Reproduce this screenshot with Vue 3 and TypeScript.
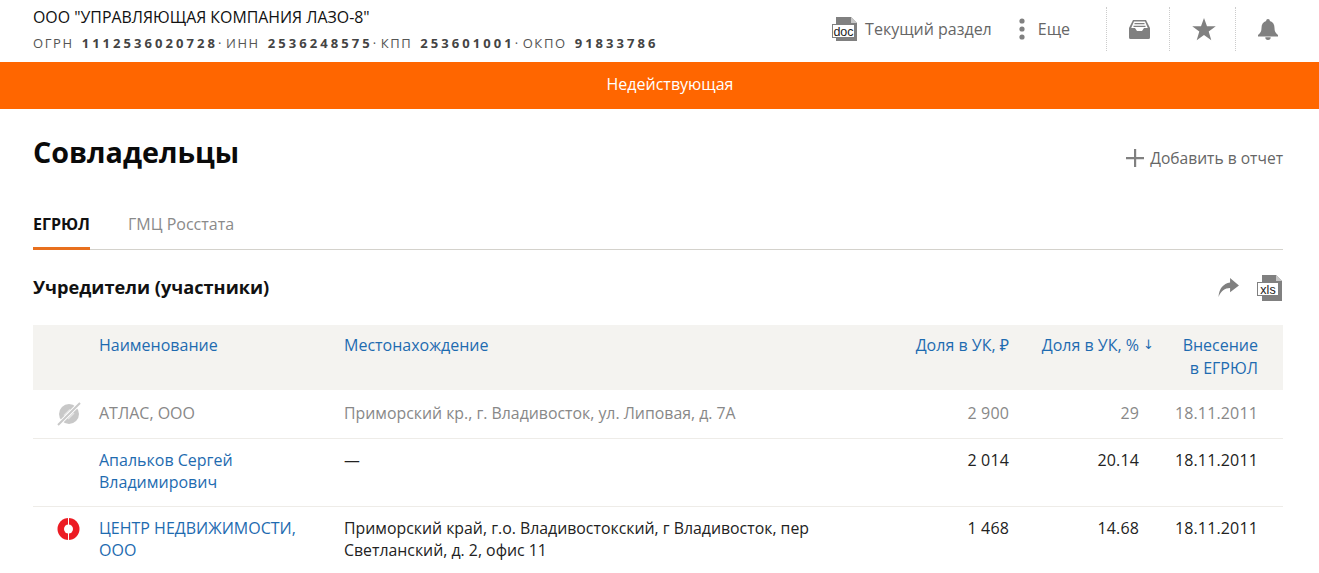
<template>
  <div class="page">
    <header class="topbar">
      <div class="org">
        <div class="org-name">ООО "УПРАВЛЯЮЩАЯ КОМПАНИЯ ЛАЗО-8"</div>
        <div class="org-codes">
          <template v-for="(c, i) in codes" :key="c.label">
            <span v-if="i > 0" class="dot">·</span>
            <span>{{ c.label }} <b>{{ c.value }}</b></span>
          </template>
        </div>
      </div>
      <nav class="tools">
        <a class="tool section-tool">
          <svg width="26" height="26" viewBox="0 0 26 26">
            <path d="M4 1h15l6 6v18H4z" fill="#808080" />
            <path d="M19 1l6 6h-6z" fill="#c8c8c8" />
            <rect x="0.500" y="8.500" width="22" height="13" fill="#fff" stroke="#808080" />
            <text x="11.500" y="19.500" text-anchor="middle" class="doc-label">doc</text>
          </svg>
          Текущий раздел
        </a>
        <a class="tool more-tool">
          <svg width="8" height="24" viewBox="0 0 8 24">
            <circle cx="4" cy="4" r="2.600" fill="#808080" />
            <circle cx="4" cy="12" r="2.600" fill="#808080" />
            <circle cx="4" cy="20" r="2.600" fill="#808080" />
          </svg>
          Еще
        </a>
        <div class="icon-btn inbox">
          <svg width="21" height="19" viewBox="0 0 21 19">
            <path fill="#808080" fill-rule="evenodd" d="M4 0h13l4 8v9.500a1.500 1.500 0 0 1-1.500 1.500h-18A1.500 1.500 0 0 1 0 17.500V8zM5 1.500 2.200 8H6l2 3h5l2-3h3.800L16 1.500z" />
            <path fill="#808080" d="M5.500 3h10v1.200h-10zM4.500 5.800h12v1.200h-12z" />
          </svg>
        </div>
        <div class="icon-btn star">
          <svg width="24" height="23" viewBox="0 0 24 23">
            <path fill="#808080" d="M12 0l3 8.300h8.800l-7.100 5.300 2.600 8.700L12 17.100 4.700 22.300l2.600-8.700L.2 8.300H9z" />
          </svg>
        </div>
        <div class="icon-btn bell">
          <svg width="20" height="21" viewBox="0 0 20 21">
            <path fill="#808080" d="M10 0a1.800 1.800 0 0 1 1.800 2C15 2.800 16.500 5.500 16.500 9c0 3.500 1 5 3.500 7v1.500H0V16c2.500-2 3.500-3.500 3.500-7 0-3.500 1.500-6.200 4.700-7A1.800 1.800 0 0 1 10 0zM7.300 18.300h5.400a2.700 2.700 0 0 1-5.400 0z" />
          </svg>
        </div>
      </nav>
    </header>

    <div class="status">Недействующая</div>

    <main class="content">
      <div class="title-row">
        <h1>Совладельцы</h1>
        <a class="add-report">
          <svg width="18" height="18" viewBox="0 0 18 18">
            <path fill="#808080" d="M8 0h2.200v8H18v2.200h-7.800V18H8v-7.800H0V8h8z" />
          </svg>
          Добавить в отчет
        </a>
      </div>

      <div class="tabs">
        <span class="tab active">ЕГРЮЛ</span>
        <span class="tab">ГМЦ Росстата</span>
      </div>

      <div class="section-head">
        <h2>Учредители (участники)</h2>
        <div class="section-actions">
          <svg width="23" height="21" viewBox="0 0 22 20">
            <path fill="#808080" d="M12.500 1 21 8 12.500 14.500v-4C7.500 10.500 3.800 13.300 1.500 19 1.800 11.500 6 6.200 12.500 5.300z" />
          </svg>
          <svg width="26" height="26" viewBox="0 0 26 26">
            <path d="M5 0h14l6 6v20H5z" fill="#808080" />
            <path d="M19 0l6 6h-6z" fill="#c8c8c8" />
            <rect x="0.500" y="7.500" width="21" height="13" fill="#fff" stroke="#808080" />
            <text x="11" y="18.500" text-anchor="middle" class="xls-label">xls</text>
          </svg>
        </div>
      </div>

      <table class="owners">
        <colgroup>
          <col class="c-icon" />
          <col class="c-name" />
          <col />
          <col class="c-sum" />
          <col class="c-pct" />
          <col class="c-date" />
        </colgroup>
        <thead>
          <tr>
            <th></th>
            <th>Наименование</th>
            <th>Местонахождение</th>
            <th class="num">Доля в УК, ₽</th>
            <th class="num sorted">Доля в УК, %<span class="arrow">↓</span></th>
            <th class="num">Внесение<br />в ЕГРЮЛ</th>
          </tr>
        </thead>
        <tbody>
          <tr v-for="row in rows" :key="row.name" :class="{ inactive: row.inactive }">
            <td class="icon-cell">
              <svg v-if="row.mark === 'off'" width="24" height="24" viewBox="0 0 24 24">
                <circle cx="12" cy="12" r="10" fill="#c8c8c8" />
                <path d="M7 13.500 13 7.500M11 17l6-6" stroke="#e4e4e4" stroke-width="1.500" />
                <path d="M1 23 23 1" stroke="#fff" stroke-width="4" />
                <path d="M1 23 23 1" stroke="#c8c8c8" stroke-width="2" />
              </svg>
              <svg v-else-if="row.mark === 'risk'" width="24" height="24" viewBox="0 0 24 24">
                <circle cx="11.500" cy="12" r="11" fill="#ec1c24" />
                <circle cx="11.500" cy="12" r="4.500" fill="#fff" />
                <path d="M11 1h1v7h-1zM11 16h1v7h-1z" fill="#fff" />
              </svg>
            </td>
            <td class="name"><a v-if="!row.inactive">{{ row.name }}</a><span v-else>{{ row.name }}</span></td>
            <td class="address">{{ row.address }}</td>
            <td class="num">{{ row.sum }}</td>
            <td class="num pct">{{ row.pct }}</td>
            <td class="num">{{ row.date }}</td>
          </tr>
        </tbody>
      </table>
    </main>
  </div>
</template>

<script setup lang="ts">
interface Owner {
  name: string
  address: string
  sum: string
  pct: string
  date: string
  inactive?: boolean
  mark?: 'off' | 'risk'
}

const codes = [
  { label: 'ОГРН', value: '1112536020728' },
  { label: 'ИНН', value: '2536248575' },
  { label: 'КПП', value: '253601001' },
  { label: 'ОКПО', value: '91833786' },
]

const rows: Owner[] = [
  {
    name: 'АТЛАС, ООО',
    address: 'Приморский кр., г. Владивосток, ул. Липовая, д. 7А',
    sum: '2 900',
    pct: '29',
    date: '18.11.2011',
    inactive: true,
    mark: 'off',
  },
  {
    name: 'Апальков Сергей Владимирович',
    address: '—',
    sum: '2 014',
    pct: '20.14',
    date: '18.11.2011',
  },
  {
    name: 'ЦЕНТР НЕДВИЖИМОСТИ, ООО',
    address: 'Приморский край, г.о. Владивостокский, г Владивосток, пер Светланский, д. 2, офис 11',
    sum: '1 468',
    pct: '14.68',
    date: '18.11.2011',
    mark: 'risk',
  },
]
</script>

<style>
html,
body {
  margin: 0;
  overflow: hidden;
  background: #fff;
}
</style>

<style scoped>
.page {
  font-family: "Open Sans", "Noto Sans", sans-serif;
  font-size: 16px;
  color: #222;
  height: 573px;
  overflow: hidden;
}

.topbar {
  display: flex;
  justify-content: space-between;
  align-items: flex-start;
  height: 62px;
  padding: 0 20px 0 33px;
  box-sizing: border-box;
}

.org-name {
  font-size: 15.900px;
  line-height: 20px;
  margin-top: 7px;
  color: #111;
}

.org-codes {
  font-size: 13px;
  line-height: 18px;
  margin-top: 7px;
  letter-spacing: 1.600px;
  color: #555;
  white-space: nowrap;
}

.org-codes b {
  font-weight: 700;
  color: #444;
  letter-spacing: 3.050px;
  margin-left: 3px;
}

.dot {
  margin: 0 3px 0 0;
}

.tools {
  display: flex;
  align-items: center;
  height: 62px;
  padding-bottom: 4px;
  box-sizing: border-box;
  color: #666;
  font-size: 16px;
}

.tool {
  display: flex;
  align-items: center;
}

.section-tool {
  gap: 7px;
  margin-right: 26px;
}

.more-tool {
  gap: 12px;
  margin-right: 36px;
}

.doc-label {
  font: 12.500px "Liberation Sans", sans-serif;
  fill: #222;
}

.xls-label {
  font: 12.500px "Liberation Sans", sans-serif;
  fill: #222;
}

.icon-btn {
  display: flex;
  align-items: center;
  justify-content: center;
  height: 44px;
  border-left: 1px dotted #ccc;
  box-sizing: border-box;
}

.inbox {
  width: 63px;
  padding-left: 3px;
}

.star {
  width: 66px;
  padding-left: 3px;
}

.bell {
  width: 64px;
}

.status {
  height: 47px;
  line-height: 45px;
  padding-left: 21px;
  text-align: center;
  background: #ff6600;
  color: #fff;
  font-size: 16px;
}

.content {
  padding: 0 36px 0 33px;
}

.title-row {
  display: flex;
  justify-content: space-between;
  align-items: center;
  height: 89px;
}

h1 {
  margin: 0;
  font-size: 28.700px;
  font-weight: 700;
  color: #0a0a0a;
  padding-bottom: 4px;
}

.add-report {
  display: flex;
  align-items: center;
  gap: 6px;
  color: #666;
  font-size: 15.600px;
  padding-top: 8px;
}

.tabs {
  display: flex;
  gap: 38px;
  height: 52px;
  border-bottom: 1px solid #d4d2cc;
  box-sizing: border-box;
}

.tab {
  height: 52px;
  box-sizing: border-box;
  padding-top: 15px;
  line-height: 22px;
  color: #8a8a8a;
  font-size: 16px;
}

.tab.active {
  color: #111;
  font-weight: 700;
  border-bottom: 3px solid #e8701e;
}

.section-head {
  display: flex;
  justify-content: space-between;
  align-items: center;
  height: 75px;
}

h2 {
  margin: 0;
  font-size: 18.200px;
  font-weight: 700;
  color: #111;
  padding-bottom: 2px;
}

.section-actions {
  display: flex;
  align-items: center;
  gap: 17px;
}

.section-actions svg {
  display: block;
}

.owners {
  width: 100%;
  table-layout: fixed;
  border-collapse: collapse;
  line-height: 22.500px;
}

.c-icon {
  width: 66px;
}

.c-name {
  width: 245px;
}

.c-sum {
  width: 130px;
}

.c-pct {
  width: 130px;
}

.c-date {
  width: 144px;
}

th {
  background: #f4f3f0;
  color: #1e6bb0;
  font-weight: 400;
  text-align: left;
  vertical-align: top;
  height: 65px;
  box-sizing: border-box;
  padding: 9px 0 10px;
}

td {
  padding: 10px 0 12px;
  vertical-align: top;
  color: #222;
  border-bottom: 1px solid #eeece8;
}

.name {
  padding-right: 20px;
}

.num {
  text-align: right;
  padding-right: 25px;
}

td.num {
  white-space: nowrap;
  letter-spacing: 0.150px;
}

th.num:nth-child(4),
td.num:nth-child(4) {
  padding-right: 0;
}

th.num:nth-child(5),
td.num:nth-child(5) {
  padding-right: 0;
}

th.sorted {
  position: relative;
}

.arrow {
  position: absolute;
  right: -15px;
  top: 9px;
  font: 13px/22px "DejaVu Sans", sans-serif;
}

.icon-cell {
  padding-left: 24px;
}

.icon-cell svg {
  display: block;
}

.name a {
  color: #1e6bb0;
}

.address {
  padding-right: 60px;
  font-size: 15.850px;
}

.inactive td {
  color: #888;
  padding-top: 12px;
  padding-bottom: 11.500px;
}
</style>
